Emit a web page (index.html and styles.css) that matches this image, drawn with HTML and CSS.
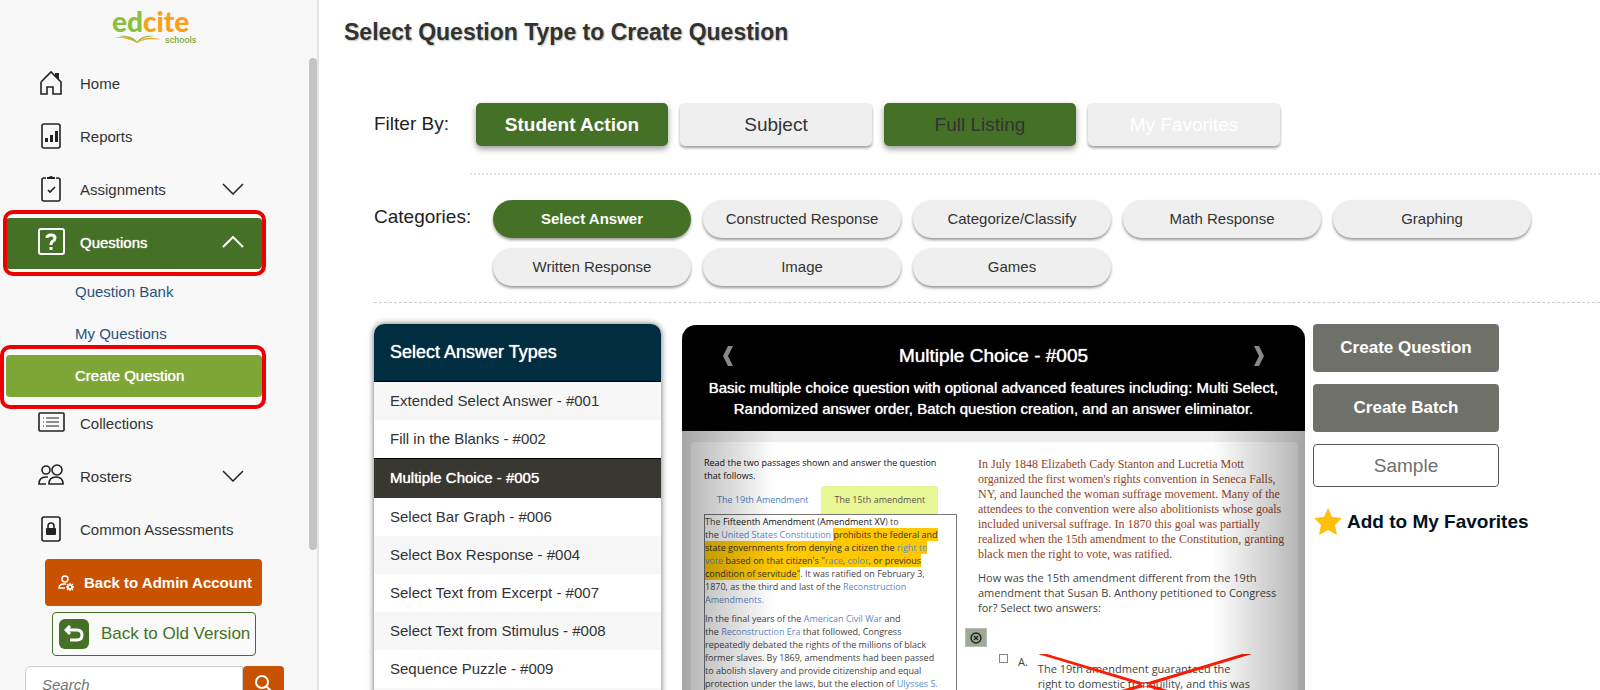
FILE: index.html
```html
<!DOCTYPE html>
<html lang="en">
<head>
    <meta charset="UTF-8">
    <meta name="viewport" content="width=device-width, initial-scale=1.0">
    <title>Create Question</title>
    <link rel="stylesheet" href="styles.css">
</head>

<body>

<aside class="sidebar">
    <div class="logo">
        <div class="logo-name"><span class="logo-ed">ed</span><span class="logo-cite">cite</span></div>
        <div class="logo-bottom">
            <svg width="50" height="9" viewBox="0 0 50 9">
                <path d="M1 3C10 2 18 4 25 8C32 4 40 3 49 5C40 1 31 3 25 7C19 2 10 1 1 3Z" fill="#f9a01b"/>
                <path d="M7 1C15 0 22 2 25 7C28 2 34 0 42 1C35 2 29 3 25 8C20 3 14 2 7 1Z" fill="#8cbf3f"/>
            </svg>
            <span>schools</span>
        </div>
    </div>

    <nav class="nav">
        <a href="#" class="nav-item">
            <svg class="icon" viewBox="0 0 28 28"><path d="M4 13V25H10V18H16V25H24V13L14 3L4 13"/><path class="solid" d="M18 4H22V11L18 7Z"/></svg>
            Home
        </a>
        <a href="#" class="nav-item">
            <svg class="icon" viewBox="0 0 28 28"><rect x="5" y="2" width="18" height="24" rx="2"/><path class="solid" d="M8 16H11V20H8ZM13 13H16V20H13ZM18 9H21V20H18Z"/></svg>
            Reports
        </a>
        <a href="#" class="nav-item">
            <svg class="icon" viewBox="0 0 28 28"><path d="M9 3H7Q5 3 5 5V24Q5 26 7 26H21Q23 26 23 24V5Q23 3 21 3H19M11 15L13 17L18 12"/><path class="solid" d="M10 2H12Q14 0 16 2H18V4H10Z"/></svg>
            Assignments
            <svg class="chevron" viewBox="0 0 22 12"><path d="M1 1L11 11L21 1"/></svg>
        </a>
        <a href="#" class="nav-item nav-open">
            <svg class="icon" viewBox="0 0 28 28"><rect x="2" y="1" width="25" height="25" rx="2"/><path class="mark" d="M10 10Q10 7 14 7Q18 7 18 10Q18 12 16 13Q14 14 14 17M14 19V22"/></svg>
            Questions
            <svg class="chevron" viewBox="0 0 22 12"><path d="M1 11L11 1L21 11"/></svg>
        </a>
        <div class="subnav">
            <a href="#">Question Bank</a>
            <a href="#">My Questions</a>
            <a href="#" class="current">Create Question</a>
        </div>
        <a href="#" class="nav-item">
            <svg class="icon" viewBox="0 0 28 28"><rect x="2" y="4" width="25" height="18" rx="1"/><path class="thin" d="M9 9H22M9 13H22M9 17H22M6 9H7M6 13H7M6 17H7"/></svg>
            Collections
        </a>
        <a href="#" class="nav-item">
            <svg class="icon" viewBox="0 0 28 28"><circle cx="9" cy="8" r="4"/><circle cx="20" cy="8" r="5"/><path d="M9 22H2Q2 15 9 15H11M12 22Q12 15 19 15Q26 15 26 22Z"/></svg>
            Rosters
            <svg class="chevron" viewBox="0 0 22 12"><path d="M1 1L11 11L21 1"/></svg>
        </a>
        <a href="#" class="nav-item">
            <svg class="icon" viewBox="0 0 28 28"><rect x="5" y="2" width="18" height="24" rx="2"/><path d="M11 14V11Q11 8 14 8Q17 8 17 11V14"/><rect class="solid" x="9" y="13" width="10" height="7" rx="1"/></svg>
            Common Assessments
        </a>
    </nav>

    <button class="btn-admin">
        <svg width="16" height="16" viewBox="0 0 16 16"><circle cx="7" cy="4" r="3"/><path d="M7 13H1Q1 9 6 9H8"/><circle cx="12" cy="12" r="2"/><path d="M12 8V10M12 14V16M8 12H10M14 12H16M9 9L11 11M13 13L15 15M15 9L13 11M9 15L11 13"/></svg>
        Back to Admin Account
    </button>
    <button class="btn-old">
        <span class="undo"><svg width="20" height="18" viewBox="0 0 20 18"><path d="M6 1L2 5L6 9M2 5H13Q18 5 18 10Q18 15 13 15H6"/></svg></span>
        Back to Old Version
    </button>
    <form class="search">
        <input type="text" placeholder="Search" aria-label="Search">
        <button type="button" aria-label="Search"><svg width="18" height="18" viewBox="0 0 18 18"><circle cx="7" cy="7" r="6"/><path d="M11 11L17 17"/></svg></button>
    </form>
    <div class="scroll-thumb"></div>
</aside>

<main class="main">
    <h1>Select Question Type to Create Question</h1>

    <section class="filters">
        <h2 class="label">Filter By:</h2>
        <div class="filter-buttons">
            <button class="filter selected">Student Action</button>
            <button class="filter">Subject</button>
            <button class="filter full">Full Listing</button>
            <button class="filter favorites">My Favorites</button>
        </div>
    </section>

    <section class="categories">
        <h2 class="label">Categories:</h2>
        <div class="pills">
            <button class="pill selected">Select Answer</button>
            <button class="pill">Constructed Response</button>
            <button class="pill">Categorize/Classify</button>
            <button class="pill">Math Response</button>
            <button class="pill">Graphing</button>
            <button class="pill">Written Response</button>
            <button class="pill">Image</button>
            <button class="pill">Games</button>
        </div>
    </section>

    <section class="content">
        <div class="types">
            <h3>Select Answer Types</h3>
            <a href="#">Extended Select Answer - #001</a>
            <a href="#">Fill in the Blanks - #002</a>
            <a href="#" class="active">Multiple Choice - #005</a>
            <a href="#">Select Bar Graph - #006</a>
            <a href="#">Select Box Response - #004</a>
            <a href="#">Select Text from Excerpt - #007</a>
            <a href="#">Select Text from Stimulus - #008</a>
            <a href="#">Sequence Puzzle - #009</a>
            <a href="#"></a>
        </div>

        <div class="preview">
            <div class="preview-head">
                <div class="preview-title">
                    <button aria-label="Previous"><svg width="10" height="20" viewBox="0 0 10 20"><path d="M5 0H10L5 10L10 20H5L0 10Z"/></svg></button>
                    <h3>Multiple Choice - #005</h3>
                    <button aria-label="Next"><svg width="10" height="20" viewBox="0 0 10 20"><path d="M5 0H0L5 10L0 20H5L10 10Z"/></svg></button>
                </div>
                <p>Basic multiple choice question with optional advanced features including: Multi Select,<br>Randomized answer order, Batch question creation, and an answer eliminator.</p>
            </div>
            <div class="slide">
                <div class="sheet">
                    <div class="passages">
                        <p class="intro">Read the two passages shown and answer the question<br>that follows.</p>
                        <div class="tabs">
                            <a href="#">The 19th Amendment</a>
                            <a href="#" class="tab-on">The 15th amendment</a>
                        </div>
                        <div class="passage">
                            <p>The <b>Fifteenth Amendment</b> (<b>Amendment XV</b>) to<br>
                            the <a href="#">United States Constitution</a> <mark>prohibits the federal and<br>
                            state governments from denying a citizen the <a href="#">right to</a><br>
                            <a href="#">vote</a> based on that citizen's "<a href="#">race</a>, <a href="#">color</a>, or previous<br>
                            condition of servitude"</mark>. It was ratified on February 3,<br>
                            1870, as the third and last of the <a href="#">Reconstruction<br>
                            Amendments.</a></p>
                            <p>In the final years of the <a href="#">American Civil War</a> and<br>
                            the <a href="#">Reconstruction Era</a> that followed, Congress<br>
                            repeatedly debated the rights of the millions of black<br>
                            former slaves. By 1869, amendments had been passed<br>
                            to abolish slavery and provide citizenship and equal<br>
                            protection under the laws, but the election of <a href="#">Ulysses S.</a></p>
                        </div>
                    </div>
                    <div class="question">
                        <p class="story">In July 1848 Elizabeth Cady Stanton and Lucretia Mott<br>
                        organized the first women's rights convention in Seneca Falls,<br>
                        NY, and launched the woman suffrage movement. Many of the<br>
                        attendees to the convention were also abolitionists whose goals<br>
                        included universal suffrage. In 1870 this goal was partially<br>
                        realized when the 15th amendment to the Constitution, granting<br>
                        black men the right to vote, was ratified.</p>
                        <p class="ask">How was the 15th amendment different from the 19th<br>
                        amendment that Susan B. Anthony petitioned to Congress<br>
                        for? Select two answers:</p>
                        <button class="eliminate" aria-label="Eliminate answers"><svg width="12" height="12" viewBox="0 0 12 12"><circle cx="6" cy="6" r="5"/><path d="M4 4L8 8M8 4L4 8"/></svg></button>
                        <div class="answer">
                            <input type="checkbox" id="answer-a">
                            <label for="answer-a"><span>A.</span>
                                <span class="answer-text">The 19th amendment guaranteed the<br>right to domestic tranquility, and this was
                                    <svg class="cross" width="214" height="62" viewBox="0 0 214 62"><path d="M0 0H9L214 61H202ZM214 0H204L0 61H12Z"/></svg>
                                </span>
                            </label>
                        </div>
                    </div>
                </div>
            </div>
        </div>

        <div class="actions">
            <button class="btn-create">Create Question</button>
            <button class="btn-create">Create Batch</button>
            <button class="btn-sample">Sample</button>
            <a href="#" class="favorite">
                <svg width="30" height="29" viewBox="0 0 30 29"><path d="M15 1L19 10L29 11L22 18L24 28L15 23L6 28L8 18L1 11L11 10Z"/></svg>
                Add to My Favorites
            </a>
        </div>
    </section>
</main>

</body>
</html>
```

FILE: styles.css
```css
* {
    box-sizing: border-box;
    margin: 0;
    padding: 0;
}

body {
    display: flex;
    height: 100vh;
    overflow: hidden;
    background: #fff;
    color: #333;
    font-family: "Liberation Sans", Arial, sans-serif;
    font-size: 15px;
}

a {
    color: inherit;
    text-decoration: none;
}

button {
    border: none;
    cursor: pointer;
    font-family: inherit;
}

svg {
    flex: none;
    fill: none;
}

/* Sidebar */
.sidebar {
    position: relative;
    flex: none;
    width: 319px;
    overflow: hidden;
    background: #f8f8f8;
    border-right: 2px solid #e4e4e4;
}

.logo {
    width: 86px;
    height: 59px;
    margin-left: 112px;
    padding-top: 8px;
}

.logo-name {
    height: 27px;
    font: 900 28px/27px Lato, sans-serif;
}

.logo-ed { color: #8cbf3f; }
.logo-cite { color: #f9a01b; }

.logo-bottom {
    display: flex;
    gap: 3px;
    color: #7fae3c;
    font: 500 9px/10px Roboto, sans-serif;
}

.nav {
    display: flex;
    flex-direction: column;
    gap: 2px;
    width: 256px;
    margin-left: 6px;
}

.nav-item {
    position: relative;
    display: flex;
    align-items: center;
    gap: 15px;
    height: 51px;
    padding: 0 18px 3px 31px;
}

.icon {
    width: 28px;
    height: 28px;
    stroke: #222;
    stroke-width: 1.6;
}

.icon .solid { fill: #222; stroke: none; }
.icon .thin { stroke-width: 1; }
.icon .mark { stroke-width: 3; }

.chevron {
    width: 22px;
    height: 12px;
    margin-left: auto;
    stroke: #222;
    stroke-width: 1.5;
}

.nav-open {
    background: #457126;
    border-radius: 4px;
    color: #fff;
    text-shadow: 0 0 1px #fff;
}

.nav-open svg { stroke: #fff; stroke-width: 2; }

.subnav a {
    position: relative;
    display: block;
    height: 42px;
    padding-left: 69px;
    color: #27527f;
    line-height: 42px;
}

.subnav .current {
    background: #7ea637;
    border-radius: 4px;
    color: #fff;
    text-shadow: 0 0 1px #fff;
}

/* Red highlight frames */
.nav-open::after,
.subnav .current::after {
    content: "";
    position: absolute;
    inset: -8px -4px -7px -3px;
    border: 4px solid #ea0000;
    border-radius: 10px;
}

.subnav .current::after { inset: -10px -4px -12px -6px; }

.btn-admin {
    display: flex;
    align-items: center;
    gap: 10px;
    width: 217px;
    height: 47px;
    margin: 3px 0 6px 45px;
    padding-left: 13px;
    background: #c95200;
    border-radius: 4px;
    color: #fff;
    font-size: 15px;
    font-weight: bold;
    white-space: nowrap;
}

.btn-admin svg { stroke: #fff; stroke-width: 1.4; }

.btn-old {
    display: flex;
    align-items: center;
    gap: 12px;
    width: 204px;
    height: 44px;
    margin: 0 0 10px 52px;
    padding-left: 6px;
    background: #fafafa;
    border: 1px solid #457126;
    border-radius: 4px;
    color: #457126;
    font-size: 17px;
    white-space: nowrap;
}

.undo {
    display: grid;
    place-items: center;
    width: 30px;
    height: 30px;
    background: #457126;
    border-radius: 6px;
}

.undo svg { stroke: #fff; stroke-width: 3; }

.search {
    display: flex;
    margin-left: 25px;
}

.search input {
    width: 218px;
    height: 36px;
    padding-left: 16px;
    background: #fff;
    border: 1px solid #ccc;
    border-radius: 6px 0 0 6px;
    font: italic 15px "Liberation Sans", Arial, sans-serif;
}

.search button {
    display: grid;
    place-items: center;
    width: 41px;
    background: #c95200;
    border-radius: 4px;
}

.search svg { stroke: #fff; stroke-width: 2; }

.scroll-thumb {
    position: absolute;
    top: 58px;
    right: 0;
    width: 8px;
    height: 492px;
    background: #c4c4c4;
    border-radius: 4px;
}

/* Main */
.main {
    flex: 1;
    min-width: 0;
    padding: 18px 0 0 55px;
}

h1 {
    margin-left: -30px;
    font-size: 23px;
    line-height: 28px;
    color: #32332d;
    text-shadow: 1px 1px 2px #bbb;
}

.label {
    flex: none;
    color: #222;
    font-size: 19px;
    font-weight: normal;
    line-height: 34px;
}

.filters {
    display: flex;
    margin-top: 57px;
}

.filters .label { width: 96px; padding-top: 4px; }

.filter-buttons {
    display: flex;
    flex: 1;
    gap: 12px;
    height: 72px;
    padding-left: 6px;
    border-bottom: 2px dotted #e4e4e4;
}

.filter {
    width: 192px;
    height: 43px;
    background: #efefef;
    border-radius: 5px;
    box-shadow: 0 2px 3px rgba(0, 0, 0, 0.4);
    color: #333;
    font-size: 19px;
}

.filter.selected,
.filter.full {
    background: #457126;
    box-shadow: 0 3px 6px rgba(0, 0, 0, 0.4);
}

.filter.selected { color: #fff; font-weight: bold; }
.filter.favorites { color: #fff; }

.categories {
    display: flex;
    padding: 25px 0 16px;
    border-bottom: 1px dashed #ccc;
}

.categories .label { width: 119px; }

.pills {
    display: flex;
    flex-wrap: wrap;
    gap: 10px 12px;
}

.pill {
    width: 198px;
    height: 38px;
    padding-bottom: 2px;
    background: #efefef;
    border-radius: 19px;
    box-shadow: 0 2px 3px rgba(0, 0, 0, 0.4);
    color: #333;
    font-size: 15px;
}

.pill.selected {
    background: #457126;
    color: #fff;
    font-weight: bold;
}

.content {
    display: flex;
    margin-top: 21px;
}

.types {
    flex: none;
    width: 287px;
    margin-right: 21px;
    border-radius: 10px 10px 0 0;
    box-shadow: 0 0 6px rgba(0, 0, 0, 0.6);
    overflow: hidden;
}

.types h3 {
    height: 58px;
    padding-left: 16px;
    background: #002d40;
    border-bottom: 1px solid #000;
    color: #fff;
    font-size: 18px;
    font-weight: normal;
    line-height: 56px;
    text-shadow: 0 0 1px #fff;
}

.types a {
    display: block;
    height: 38px;
    padding-left: 16px;
    background: #fff;
    line-height: 38px;
}

.types a:nth-of-type(odd) { background: #f7f7f7; }

.types .active:nth-of-type(odd) {
    height: 40px;
    background: #383831;
    border-top: 1px solid #000;
    color: #fff;
    text-shadow: 0 0 1px #fff;
}

/* Preview of the chosen type */
.preview {
    flex: 1;
    min-width: 0;
    margin: 1px 8px 0 0;
    border-radius: 14px 14px 0 0;
    overflow: hidden;
}

.preview-head {
    height: 106px;
    padding: 18px 41px 0;
    background: #000;
    color: #fff;
    text-align: center;
    text-shadow: 0 0 1px #fff;
}

.preview-title {
    display: flex;
    align-items: center;
    justify-content: space-between;
    height: 26px;
    margin-bottom: 8px;
}

.preview-title h3 { font-size: 19px; font-weight: normal; }
.preview-title button { height: 20px; background: none; }
.preview-title svg { fill: #888; }

.preview-head p {
    margin: 0 -20px;
    line-height: 21px;
    white-space: nowrap;
}

.slide {
    position: relative;
    height: 300px;
    padding: 11px 7px 0 9px;
    background: #ededed;
}

/* Darkened edges */
.slide::after {
    content: "";
    position: absolute;
    inset: 0;
    background:
        linear-gradient(to right, rgba(0, 0, 0, 0.3), transparent) left / 93px 100% no-repeat,
        linear-gradient(to left, rgba(0, 0, 0, 0.3), transparent) right / 93px 100% no-repeat;
    pointer-events: none;
}

.sheet {
    display: flex;
    gap: 21px;
    height: 100%;
    padding: 14px 13px 0;
    background: #fff;
    border-radius: 4px;
    color: #444;
    font: 9px/13px "Open Sans", sans-serif;
    white-space: nowrap;
}

.passages { flex: none; width: 253px; }
.intro { color: #111; }

.tabs {
    display: flex;
    height: 28px;
    margin-top: 4px;
    color: #4f7fbd;
    line-height: 28px;
}

.tabs a { padding: 0 13px; }

.tabs .tab-on {
    background: #e8f793;
    border-radius: 3px 3px 0 0;
    color: #555;
}

.passage {
    border: 1px solid #777;
    height: 300px;
}

.passage p { margin-bottom: 6px; }
.passage a { color: #5b8aca; }
.passage b { color: #111; font-weight: normal; }

.passage mark {
    padding: 0;
    background: #ffc800;
    color: #333;
}

.story {
    padding-top: 1px;
    color: #93441f;
    font: 12px/15px "Liberation Serif", serif;
}

.ask {
    margin-top: 8px;
    font-size: 11px;
    line-height: 15px;
}

.eliminate {
    display: grid;
    place-items: center;
    width: 22px;
    height: 19px;
    margin: 13px 0 7px -13px;
    background: #9eaa92;
    border: 1px solid #bbb;
}

.eliminate svg { stroke: #222; stroke-width: 1.4; }

.answer {
    display: flex;
    align-items: flex-start;
    padding-left: 21px;
}

.answer input {
    appearance: none;
    width: 9px;
    height: 9px;
    margin-right: 10px;
    background: #fff;
    border: 1px solid #888;
}

.answer label {
    display: flex;
    gap: 10px;
    font-size: 11px;
    line-height: 15px;
}

.answer-text {
    position: relative;
    padding-top: 7px;
}

.cross {
    position: absolute;
    top: 0;
    left: 0;
    fill: #fb1c05;
}

/* Actions */
.actions {
    display: flex;
    flex-direction: column;
    flex: none;
    gap: 12px;
    width: 287px;
}

.actions button {
    width: 186px;
    height: 48px;
    border-radius: 4px;
}

.actions .btn-create {
    background: #70716a;
    color: #fff;
    font-size: 17px;
    font-weight: bold;
}

.actions .btn-sample {
    height: 43px;
    background: #fff;
    border: 1px solid #55564f;
    color: #70716a;
    font-size: 19px;
}

.favorite {
    display: flex;
    align-items: center;
    gap: 4px;
    margin-top: 8px;
    color: #001224;
    font-size: 19px;
    font-weight: bold;
}

.favorite svg { fill: #ffbf0b; }
```
